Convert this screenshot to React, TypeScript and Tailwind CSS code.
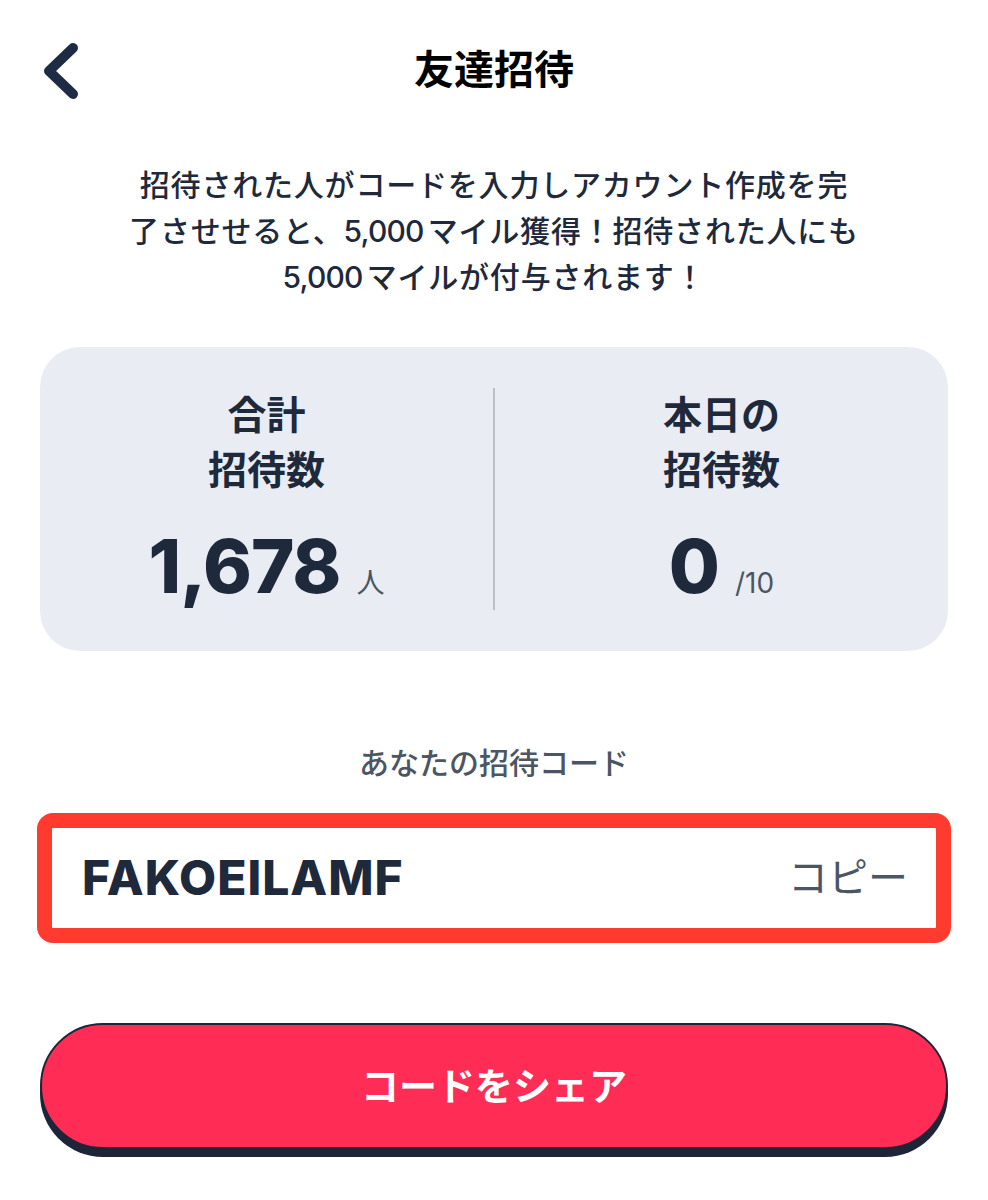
import React from 'react';

const font = { fontFamily: 'Inter, "Noto Sans CJK JP", sans-serif' };

function StatColumn({ label1, label2, value, unit }: { label1: string; label2: string; value: string; unit: string }) {
  return (
    <div className="flex flex-1 flex-col items-center pt-[40px]">
      <div className="text-[39px] font-bold leading-[55px] text-[#1e293b]">{label1}</div>
      <div className="text-[39px] font-bold leading-[55px] text-[#1e293b]">{label2}</div>
      <div className="mt-[24px] flex items-baseline gap-[16px]">
        <span className="text-[74px] font-extrabold leading-[90px] tracking-[-1px] text-[#1e293b]">{value}</span>
        <span className="text-[28px] font-normal text-[#4b5563]">{unit}</span>
      </div>
    </div>
  );
}

export default function App() {
  return (
    <div className="w-[988px] min-h-[1200px] bg-white" style={font}>
      {/* header */}
      <div className="flex h-[140px] items-center px-[40px]">
        <button className="flex h-[60px] w-[50px] items-center">
          <svg width="44" height="60" viewBox="0 0 44 60">
            <polyline points="33,8 9,31 33,54" fill="none" stroke="#1e2b44" strokeWidth="10" strokeLinecap="round" strokeLinejoin="round" />
          </svg>
        </button>
        <h1 className="flex-1 text-center text-[40px] font-bold text-black">友達招待</h1>
        <div className="w-[50px]" />
      </div>

      <p className="mt-[22px] whitespace-nowrap text-center text-[30px] font-medium leading-[46px] tracking-[0.8px] text-[#1e293b]">
        招待された人がコードを入力しアカウント作成を完
        <br />
        了させせると、<span className="mr-[4px] tracking-[-0.8px]">5,000</span>マイル獲得！招待された人にも
        <br />
        <span className="mr-[4px] tracking-[-0.8px]">5,000</span>マイルが付与されます！
      </p>

      <div className="mx-[40px] mt-[47px] flex h-[304px] rounded-[40px] bg-[#e9edf3]">
        <StatColumn label1="合計" label2="招待数" value="1,678" unit="人" />
        <div className="my-[41px] w-[2px] bg-[#b8c0c4]" />
        <StatColumn label1="本日の" label2="招待数" value="0" unit="/10" />
      </div>

      <div className="mt-[92px] text-center text-[30px] font-medium leading-[40px] text-[#4b5563]">あなたの招待コード</div>

      <div className="mx-[37px] mt-[30px] flex h-[130px] items-center justify-between rounded-[16px] border-[15px] border-[#ff3b30] bg-white pl-[30px] pr-[28px]">
        <span className="text-[48px] font-extrabold tracking-[1px] text-[#1e293b]">FAKOEILAMF</span>
        <span className="text-[40px] font-normal text-[#4b5563]">コピー</span>
      </div>

      <div className="mx-[40px] mt-[80px]">
        <button className="flex h-[126px] w-full items-center justify-center rounded-full border-[2px] border-[#1e2539] bg-[#ff2d55] shadow-[0_8px_0_#1e2539]">
          <span className="text-[38px] font-bold text-white">コードをシェア</span>
        </button>
      </div>
    </div>
  );
}
